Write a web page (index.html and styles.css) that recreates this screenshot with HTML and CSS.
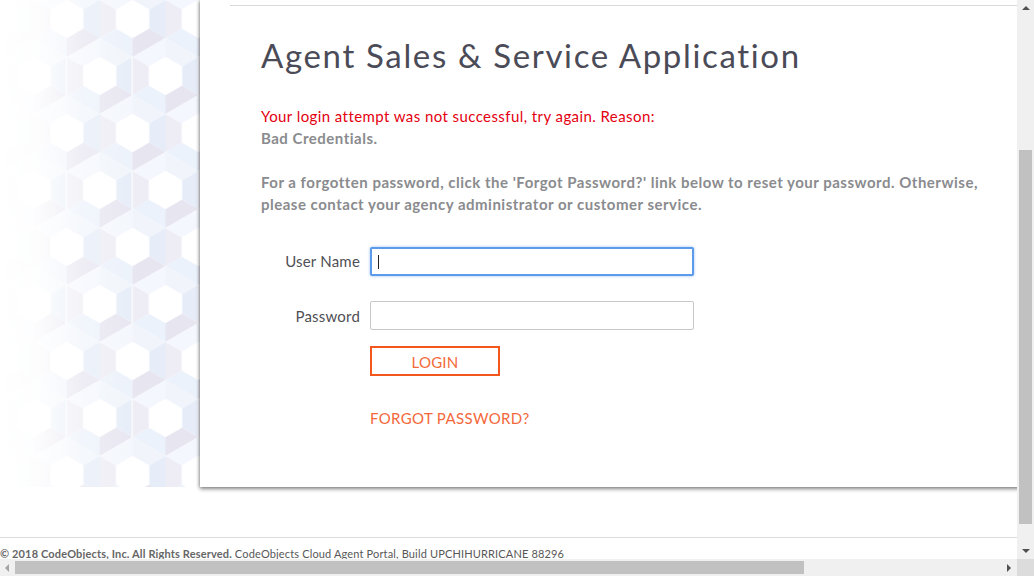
FILE: index.html
```html
<!DOCTYPE html>
<html lang="en">
<head>
<meta charset="utf-8">
<title>Agent Sales &amp; Service Application</title>
<link rel="stylesheet" href="styles.css">
</head>
<body>
<div class="window">
  <div class="viewport">
    <div class="stage">
      <div class="pattern" aria-hidden="true">
        <svg width="200" height="487" viewBox="0 0 200 487">
          <defs>
            <g id="cell">
              <polygon points="0,-38 32.9,-19 16.45,-9.5 0,-19" fill="#f1f5fb"/>
              <polygon points="32.9,-19 32.9,19 16.45,9.5 16.45,-9.5" fill="#e6edf8"/>
              <polygon points="32.9,19 0,38 0,19 16.45,9.5" fill="#e7e5f0"/>
              <polygon points="0,38 -32.9,19 -16.45,9.5 0,19" fill="#ecf2fb"/>
              <polygon points="-32.9,19 -32.9,-19 -16.45,-9.5 -16.45,9.5" fill="#eeedf5"/>
              <polygon points="-32.9,-19 0,-38 0,-19 -16.45,-9.5" fill="#f4f7fd"/>
              <polygon points="0,-19 16.45,-9.5 16.45,9.5 0,19 -16.45,9.5 -16.45,-9.5" fill="#ffffff"/>
            </g>
            <pattern id="hex" patternUnits="userSpaceOnUse" x="0" y="0" width="65.8" height="114">
              <use href="#cell" x="1" y="19"/>
              <use href="#cell" x="66.8" y="19"/>
              <use href="#cell" x="33.9" y="76"/>
              <use href="#cell" x="1" y="133"/>
              <use href="#cell" x="66.8" y="133"/>
              <use href="#cell" x="33.9" y="-38"/>
            </pattern>
            <linearGradient id="fade" x1="0" y1="0" x2="1" y2="0">
              <stop offset="0" stop-color="#fff" stop-opacity="1"/>
              <stop offset="0.18" stop-color="#fff" stop-opacity="0.9"/>
              <stop offset="0.42" stop-color="#fff" stop-opacity="0.3"/>
              <stop offset="0.7" stop-color="#fff" stop-opacity="0"/>
            </linearGradient>
          </defs>
          <rect width="200" height="487" fill="url(#hex)"/>
          <rect width="200" height="487" fill="url(#fade)"/>
        </svg>
      </div>
      <main class="card">
        <div class="rule"></div>
        <div class="content">
          <h1 class="title">Agent Sales &amp; Service Application</h1>
          <p class="error">Your login attempt was not successful, try again. Reason:</p>
          <p class="reason">Bad Credentials.</p>
          <p class="help">For a forgotten password, click the 'Forgot Password?' link below to reset your password. Otherwise,<br>please contact your agency administrator or customer service.</p>
          <form class="login-form">
            <label class="label" for="user">User Name</label>
            <div class="field focused">
              <input class="input" id="user" type="text">
              <span class="caret"></span>
            </div>
            <label class="label label-pass" for="pass">Password</label>
            <div class="field field-pass">
              <input class="input" id="pass" type="password">
            </div>
            <div class="actions">
              <button class="btn-login" type="button">LOGIN</button>
              <a class="forgot" href="#">FORGOT PASSWORD?</a>
            </div>
          </form>
        </div>
      </main>
    </div>
    <footer class="footer">
      <span class="copy">© 2018 CodeObjects, Inc. All Rights Reserved.</span> CodeObjects Cloud Agent Portal, Build UPCHIHURRICANE 88296
    </footer>
  </div>
  <div class="vbar">
    <span class="arrow arrow-up"></span>
    <div class="vtrack"><div class="vthumb"></div></div>
    <span class="arrow arrow-down"></span>
  </div>
  <div class="hbar">
    <span class="arrow arrow-left"></span>
    <div class="htrack"><div class="hthumb"></div></div>
    <span class="arrow arrow-right"></span>
  </div>
  <div class="corner"></div>
</div>
</body>
</html>
```
FILE: styles.css
```css
* { box-sizing: border-box; }
html, body { margin: 0; padding: 0; background: #fff; }
body {
  font-family: Lato, "Liberation Sans", sans-serif;
  width: 1034px;
  height: 576px;
  overflow: hidden;
}
.window {
  display: grid;
  grid-template-columns: 1017px 17px;
  grid-template-rows: 559px 17px;
  width: 1034px;
  height: 576px;
}
.viewport {
  overflow: hidden;
  background: #fff;
  display: flex;
  flex-direction: column;
}
.stage {
  display: flex;
  height: 487px;
  flex: none;
}
.pattern {
  width: 200px;
  flex: none;
  height: 487px;
}
.pattern svg { display: block; }
.card {
  flex: none;
  width: 1060px;
  height: 487px;
  background: #fff;
  box-shadow: 0 2px 4px rgba(0,0,0,0.45), -1px 0 3px rgba(0,0,0,0.2);
  padding-top: 5px;
}
.rule {
  margin-left: 30px;
  height: 1px;
  background: #d9d9d9;
}
.content {
  padding-left: 61px;
}
.title {
  margin: 29px 0 0;
  font-size: 33px;
  line-height: 40px;
  font-weight: 400;
  letter-spacing: 1.65px;
  color: #4b4b57;
}
.error {
  margin: 30px 0 0;
  font-size: 15px;
  line-height: 22px;
  letter-spacing: 0.42px;
  color: #e4000f;
}
.reason {
  margin: 0;
  font-size: 15px;
  line-height: 22px;
  font-weight: 700;
  letter-spacing: 0.5px;
  color: #8a8b8e;
}
.help {
  margin: 23px 0 0;
  font-size: 15px;
  line-height: 21.5px;
  font-weight: 700;
  letter-spacing: 0.5px;
  color: #8a8b8e;
}
.login-form {
  margin-top: 32px;
  display: grid;
  grid-template-columns: 99px 324px;
  column-gap: 10px;
  align-items: center;
}
.label {
  text-align: right;
  font-size: 15px;
  letter-spacing: 0.2px;
  color: #4f4f55;
  padding-bottom: 2px;
}
.field {
  position: relative;
  height: 29px;
}
.field-pass { margin-top: 25px; }
.label-pass { margin-top: 25px; padding-bottom: 0; }
.input {
  display: block;
  width: 100%;
  height: 100%;
  border: 1px solid #c8c8c8;
  border-radius: 2px;
  background: #fff;
  font: inherit;
  padding: 0 8px;
  outline: none;
}
.focused .input {
  border: 2px solid #5b9bea;
  box-shadow: 0 0 3px rgba(80,150,240,0.6);
}
.caret {
  position: absolute;
  left: 8px;
  top: 8px;
  width: 1px;
  height: 14px;
  background: #222;
}
.actions {
  grid-column: 2;
  margin-top: 16px;
  display: flex;
  flex-direction: column;
  align-items: flex-start;
}
.btn-login {
  width: 130px;
  height: 30px;
  border: 2px solid #f4571d;
  background: #fff;
  color: #f36a3a;
  font-family: inherit;
  font-size: 15px;
  letter-spacing: 0.2px;
  padding: 2px 0 0;
}
.forgot {
  margin-top: 33px;
  font-size: 15px;
  letter-spacing: 0.35px;
  color: #f3683a;
  text-decoration: none;
  line-height: 18px;
}
.footer {
  margin-top: 50px;
  border-top: 1px solid #dcdcdc;
  padding-top: 9px;
  font-size: 11px;
  line-height: 13px;
  letter-spacing: 0.15px;
  color: #575757;
  white-space: nowrap;
}
.copy { font-weight: 700; color: #666; }

/* fake scrollbars */
.vbar {
  background: #f0f0f0;
  display: flex;
  flex-direction: column;
  align-items: center;
}
.vtrack { flex: 1; width: 100%; padding: 140px 2px 25px; }
.vthumb { height: 100%; background: #c1c1c1; }
.hbar {
  background: #f0f0f0;
  display: flex;
  align-items: center;
}
.htrack { flex: 1; height: 100%; padding: 2px 203px 2px 6px; }
.hthumb { height: 100%; background: #c1c1c1; }
.corner { background: #dcdcdc; }
.arrow { width: 0; height: 0; flex: none; }
.arrow-up {
  margin-top: 6px;
  border-left: 4px solid transparent;
  border-right: 4px solid transparent;
  border-bottom: 4px solid #505050;
}
.arrow-down {
  margin-bottom: 6px;
  border-left: 4px solid transparent;
  border-right: 4px solid transparent;
  border-top: 4px solid #505050;
}
.arrow-left {
  margin-left: 5px;
  border-top: 4px solid transparent;
  border-bottom: 4px solid transparent;
  border-right: 4px solid #a3a3a3;
}
.arrow-right {
  margin-right: 6px;
  border-top: 4px solid transparent;
  border-bottom: 4px solid transparent;
  border-left: 4px solid #505050;
}
```
